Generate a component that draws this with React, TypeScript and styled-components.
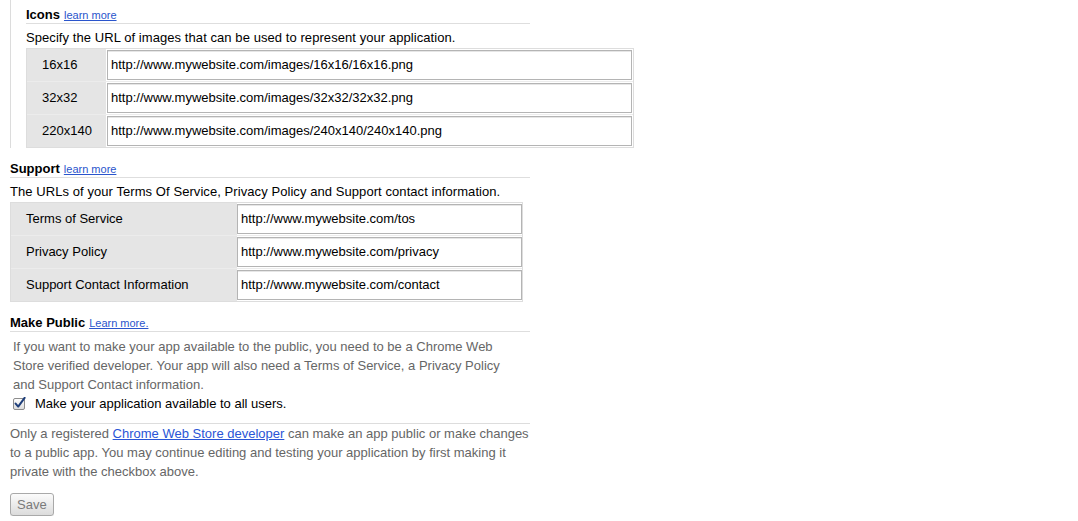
import React from "react";
import styled, { createGlobalStyle } from "styled-components";

const Global = createGlobalStyle`
  html, body { margin: 0; padding: 0; background: #fff; }
  body {
    font-family: "Liberation Sans", Arial, Helvetica, sans-serif;
    font-size: 13px;
    color: #000;
  }
`;

const Page = styled.div`
  padding-left: 10px;
  width: 520px;
`;

const Section = styled.section<{ $indented?: boolean; $gap?: number }>`
  display: flex;
  flex-direction: column;
  margin-top: ${(p) => p.$gap ?? 0}px;
  ${(p) =>
    p.$indented &&
    `
    border-left: 1px solid #dcdcdc;
    padding-left: 15px;
    padding-top: 7px;
  `}
`;

const Heading = styled.div`
  line-height: 16px;
  border-bottom: 1px solid #dedede;
  white-space: nowrap;
`;

const Title = styled.b`
  font-weight: bold;
  font-size: 13px;
`;

const SmallLink = styled.a`
  font-size: 11px;
  color: #2a55cc;
  text-decoration: underline;
  margin-left: 4px;
`;

const Desc = styled.div`
  margin-top: 5px;
  line-height: 18px;
  white-space: nowrap;
  letter-spacing: 0.07px;
`;

const Table = styled.div<{ $width: number }>`
  margin-top: 1px;
  width: ${(p) => p.$width}px;
  box-sizing: border-box;
  border: 1px solid #dddddd;
  display: flex;
  flex-direction: column;
`;

const Row = styled.div<{ $label: number }>`
  display: grid;
  grid-template-columns: ${(p) => p.$label}px 1fr;
  height: 32px;
  & + & {
    border-top: 1px solid #ececec;
  }
`;

const LabelCell = styled.div`
  background: #e5e5e5;
  display: flex;
  align-items: center;
  padding-left: 15px;
  padding-bottom: 1px;
  white-space: nowrap;
`;

const InputCell = styled.div<{ $left: number; $right: number }>`
  display: flex;
  align-items: center;
  padding: 0 ${(p) => p.$right}px 0 ${(p) => p.$left}px;
`;

const UrlInput = styled.input`
  box-sizing: border-box;
  width: 100%;
  height: 30px;
  margin: 0;
  border: 1px solid #b4b4b4;
  box-shadow: inset 0 1px 0 #e6e6e6;
  padding: 0 3px 1px;
  font-family: "Liberation Sans", Arial, Helvetica, sans-serif;
  font-size: 13px;
  color: #000;
  background: #fff;
  outline: none;
`;

const Para = styled.p<{ $indent?: number; $width?: number }>`
  margin: 0;
  padding-left: ${(p) => p.$indent ?? 0}px;
  ${(p) => (p.$width ? `width: ${p.$width}px;` : "")}
  line-height: 19px;
  color: #666;
`;

const CheckRow = styled.label`
  display: flex;
  align-items: center;
  height: 19px;
  padding-left: 3px;
  color: #000;
  white-space: nowrap;
`;

const CheckBox = styled.span`
  width: 13px;
  height: 13px;
  margin-right: 9px;
  display: inline-flex;
`;

const Divider = styled.div`
  margin-top: 10px;
  border-top: 1px solid #dddddd;
`;

const InlineLink = styled.a`
  color: #2a55d6;
  text-decoration: underline;
`;

const SaveButton = styled.button`
  margin-top: 12px;
  align-self: flex-start;
  height: 23px;
  padding: 0 6px;
  border: 1px solid #a9a9a9;
  border-radius: 3px;
  background: linear-gradient(#fbfbfb, #dcdcdc);
  color: #7a7a7a;
  font-family: "Liberation Sans", Arial, Helvetica, sans-serif;
  font-size: 13px;
  box-shadow: 0 1px 0 rgba(0, 0, 0, 0.08);
`;

const iconRows = [
  ["16x16", "http://www.mywebsite.com/images/16x16/16x16.png"],
  ["32x32", "http://www.mywebsite.com/images/32x32/32x32.png"],
  ["220x140", "http://www.mywebsite.com/images/240x140/240x140.png"],
];

const supportRows = [
  ["Terms of Service", "http://www.mywebsite.com/tos"],
  ["Privacy Policy", "http://www.mywebsite.com/privacy"],
  ["Support Contact Information", "http://www.mywebsite.com/contact"],
];

const CheckIcon = () => (
  <svg width="13" height="13" viewBox="0 0 13 13">
    <defs>
      <linearGradient id="cbg" x1="0" y1="0" x2="0" y2="1">
        <stop offset="0" stopColor="#ffffff" />
        <stop offset="1" stopColor="#dcdcdc" />
      </linearGradient>
    </defs>
    <rect x="0.5" y="1.5" width="11" height="11" rx="1.5" fill="url(#cbg)" stroke="#8d8d8d" />
    <path d="M2.6 6.6 L5.2 9.6 L11.6 0.8" fill="none" stroke="#1f3f7a" strokeWidth="2" strokeLinecap="round" strokeLinejoin="round" />
  </svg>
);

export default function App() {
  return (
    <>
      <Global />
      <Page>
        <Section $indented>
          <Heading>
            <Title>Icons</Title>
            <SmallLink href="#">learn more</SmallLink>
          </Heading>
          <Desc>Specify the URL of images that can be used to represent your application.</Desc>
          <Table $width={608}>
            {iconRows.map(([label, url]) => (
              <Row key={label} $label={79}>
                <LabelCell>{label}</LabelCell>
                <InputCell $left={1} $right={1}>
                  <UrlInput defaultValue={url} />
                </InputCell>
              </Row>
            ))}
          </Table>
        </Section>

        <Section $gap={13}>
          <Heading>
            <Title>Support</Title>
            <SmallLink href="#">learn more</SmallLink>
          </Heading>
          <Desc>The URLs of your Terms Of Service, Privacy Policy and Support contact information.</Desc>
          <Table $width={513}>
            {supportRows.map(([label, url]) => (
              <Row key={label} $label={226}>
                <LabelCell>{label}</LabelCell>
                <InputCell $left={0} $right={0}>
                  <UrlInput defaultValue={url} />
                </InputCell>
              </Row>
            ))}
          </Table>
        </Section>

        <Section $gap={13}>
          <Heading>
            <Title>Make Public</Title>
            <SmallLink href="#">Learn more.</SmallLink>
          </Heading>
          <Para $indent={3} $width={502} style={{ marginTop: 5 }}>
            If you want to make your app available to the public, you need to be a Chrome Web Store
            verified developer. Your app will also need a Terms of Service, a Privacy Policy and
            Support Contact information.
          </Para>
          <CheckRow>
            <CheckBox>
              <CheckIcon />
            </CheckBox>
            Make your application available to all users.
          </CheckRow>
          <Divider>
            <Para>
              Only a registered <InlineLink href="#">Chrome Web Store developer</InlineLink> can make
              an app public or make changes to a public app. You may continue editing and testing
              your application by first making it private with the checkbox above.
            </Para>
          </Divider>
          <SaveButton type="button">Save</SaveButton>
        </Section>
      </Page>
    </>
  );
}
